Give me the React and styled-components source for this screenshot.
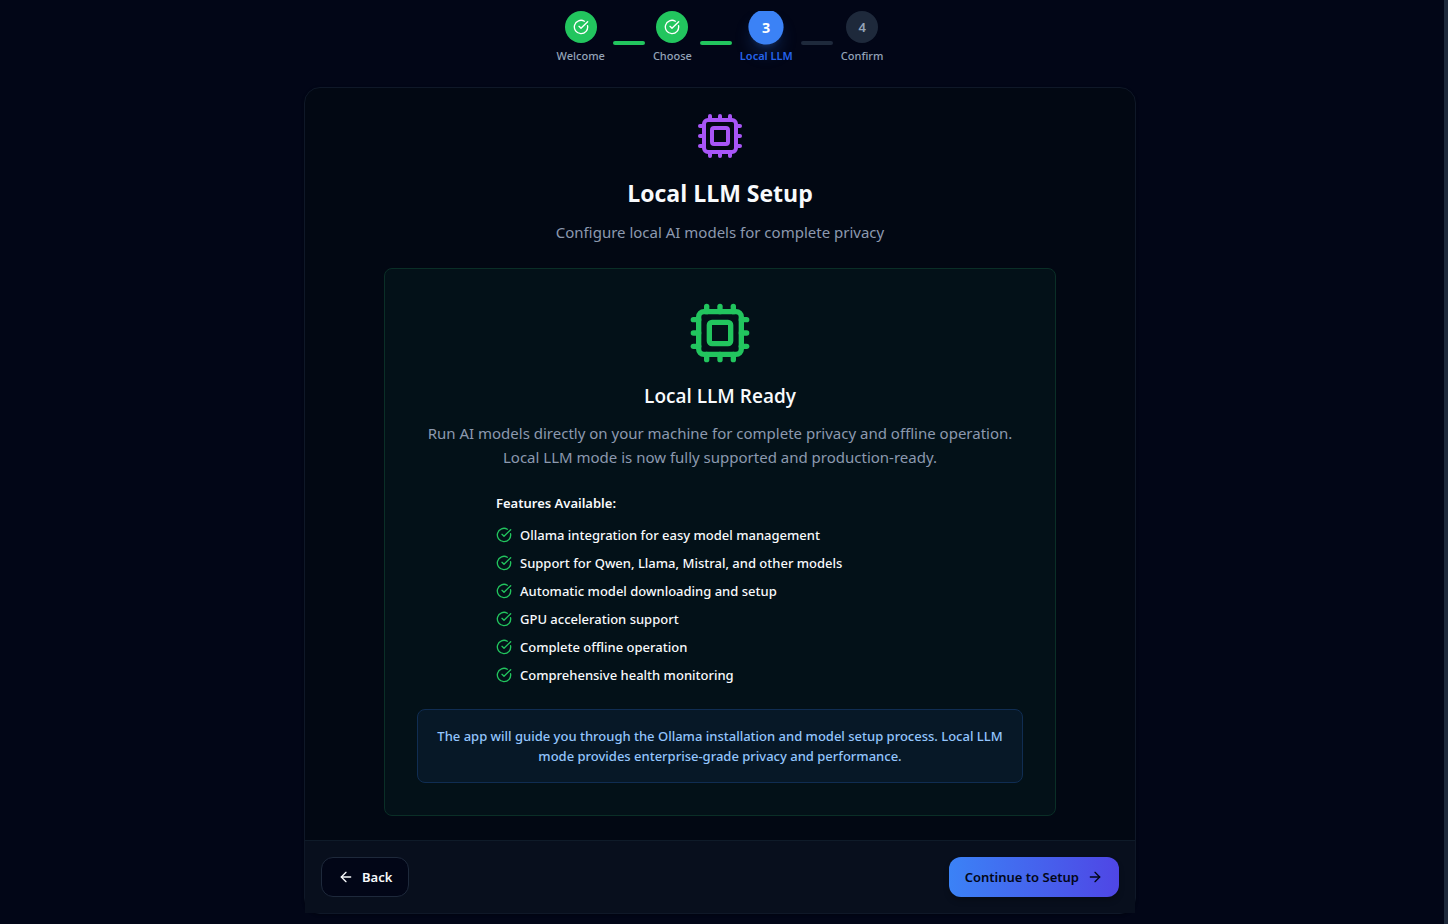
import React from "react";
import styled, { createGlobalStyle, css } from "styled-components";
import { ArrowLeft, ArrowRight, CircleCheckBig, Cpu } from "lucide-react";

const headingFont = '"Segoe UI", "Open Sans", sans-serif';

const GlobalStyle = createGlobalStyle`
  *, *::before, *::after { box-sizing: border-box; }
  html { background: #020617; }
  body {
    margin: 0;
    color: #f8fafc;
    font-family: "Segoe UI", "Noto Sans", "Open Sans", sans-serif;
    font-size: 15px;
    line-height: 24px;
  }
  h1, h2, h3, p, ul, ol { margin: 0; padding: 0; }
  ul, ol { list-style: none; }
`;

const Page = styled.div`
  display: flex;
  min-height: 100vh;
  background: #020617;
`;

const Content = styled.main`
  flex: 1;
  min-width: 0;
  display: flex;
  flex-direction: column;
  align-items: center;
  padding: 11px 16px 10px;
`;

const ScrollTrack = styled.div`
  width: 8px;
  flex-shrink: 0;
  border-right: 4px solid #1e293b;
`;

const Stepper = styled.ol`
  display: flex;
  align-items: center;
  justify-content: center;
  gap: 8px;
  width: 100%;
  && { padding-bottom: 22px; }
  overflow: hidden;
`;

const Step = styled.li`
  display: flex;
  flex-direction: column;
  align-items: center;
  gap: 4px;
`;

const StepCircle = styled.span`
  display: flex;
  align-items: center;
  justify-content: center;
  width: 32px;
  height: 32px;
  border-radius: 50%;
  font-size: 13px;
  line-height: 20px;
  font-weight: 600;
  background: #1e293b;
  color: #94a3b8;
  ${(p) => p.$state === "done" && css`
    background: #22c55e;
    color: #ffffff;
  `}
  ${(p) => p.$state === "active" && css`
    background: #3b82f6;
    color: #ffffff;
    font-weight: 700;
    transform: scale(1.1);
    box-shadow: 0 10px 15px -3px rgba(59, 130, 246, 0.25), 0 4px 6px -4px rgba(59, 130, 246, 0.25);
  `}
`;

const StepLabel = styled.span`
  font-size: 11px;
  line-height: 18px;
  color: ${(p) => (p.$active ? "#2563eb" : "#94a3b8")};
  font-weight: ${(p) => (p.$active ? 600 : 500)};
`;

const StepLine = styled.li`
  width: 32px;
  height: 4px;
  margin-top: 10px;
  border-radius: 2px;
  background: ${(p) => (p.$done ? "#22c55e" : "#1e293b")};
`;

const Card = styled.section`
  width: 100%;
  max-width: 832px;
  border: 1px solid #0f1828;
  border-radius: 16px;
  background: #020813;
  box-shadow: 0 1px 3px rgba(0, 0, 0, 0.3);
`;

const CardBody = styled.div`
  display: flex;
  flex-direction: column;
  align-items: center;
  padding: 24px;
  text-align: center;
`;

const HeaderIcon = styled(Cpu)`
  display: block;
  color: #a855f7;
  margin-bottom: 16px;
`;

const Title = styled.h1`
  font-family: ${headingFont};
  font-size: 23px;
  line-height: 34px;
  font-weight: 700;
  && { margin-bottom: 10px; }
`;

const Muted = styled.p`
  font-size: 15px;
  line-height: 24px;
  color: #8c99af;
`;

const ReadyPanel = styled.section`
  width: 100%;
  max-width: 672px;
  margin-top: 24px;
  padding: 32px;
  display: flex;
  flex-direction: column;
  align-items: center;
  border: 1px solid #0a2f27;
  border-radius: 8px;
  background: #031118;
`;

const ReadyIcon = styled(Cpu)`
  display: block;
  color: #22c55e;
  margin-bottom: 16px;
`;

const ReadyTitle = styled.h2`
  font-family: ${headingFont};
  font-size: 19px;
  line-height: 30px;
  font-weight: 600;
  && { margin-bottom: 10px; }
`;

const Features = styled.div`
  width: 100%;
  max-width: 448px;
  margin: 24px 0;
  text-align: left;
  font-size: 13px;
  line-height: 20px;
`;

const FeaturesTitle = styled.h3`
  font-size: 13px;
  line-height: 20px;
  font-weight: 600;
  && { margin-bottom: 12px; }
`;

const FeatureList = styled.ul`
  display: flex;
  flex-direction: column;
  gap: 8px;
`;

const Feature = styled.li`
  display: flex;
  align-items: center;
  gap: 8px;
  font-weight: 500;
  svg { color: #22c55e; flex-shrink: 0; }
`;

const Note = styled.p`
  width: 100%;
  && { padding: 16px; }
  border: 1px solid #102d52;
  border-radius: 8px;
  background: #071827;
  color: #93c5fd;
  font-size: 13px;
  line-height: 20px;
  font-weight: 500;
`;

const CardFooter = styled.footer`
  display: flex;
  align-items: center;
  justify-content: space-between;
  padding: 16px;
  border-top: 1px solid #0f1b29;
  background: #080f1d;
`;

const Button = styled.button`
  display: inline-flex;
  align-items: center;
  justify-content: center;
  gap: 8px;
  height: 40px;
  padding: 0 16px;
  border: 1px solid #1e293b;
  border-radius: 12px;
  background: #020617;
  color: #f8fafc;
  font-family: inherit;
  font-size: 13px;
  line-height: 20px;
  font-weight: 600;
  cursor: pointer;
  ${(p) => p.$primary && css`
    border: 0;
    background: linear-gradient(to right, #3b82f6, #4f46e5);
    color: #020617;
    box-shadow: 0 4px 6px -1px rgba(0, 0, 0, 0.3);
  `}
`;

const steps = [
  { label: "Welcome", state: "done" },
  { label: "Choose", state: "done" },
  { label: "Local LLM", state: "active" },
  { label: "Confirm", state: "todo" },
];

const features = [
  "Ollama integration for easy model management",
  "Support for Qwen, Llama, Mistral, and other models",
  "Automatic model downloading and setup",
  "GPU acceleration support",
  "Complete offline operation",
  "Comprehensive health monitoring",
];

export default function App() {
  return (
    <>
      <GlobalStyle />
      <Page>
        <Content>
          <Stepper>
            {steps.map((step, i) => (
              <React.Fragment key={step.label}>
                {i > 0 && <StepLine $done={steps[i - 1].state === "done"} aria-hidden="true" />}
                <Step aria-current={step.state === "active" ? "step" : undefined}>
                  <StepCircle $state={step.state}>
                    {step.state === "done" ? <CircleCheckBig size={16} /> : i + 1}
                  </StepCircle>
                  <StepLabel $active={step.state === "active"}>{step.label}</StepLabel>
                </Step>
              </React.Fragment>
            ))}
          </Stepper>
          <Card>
            <CardBody>
              <HeaderIcon size={48} />
              <Title>Local LLM Setup</Title>
              <Muted>Configure local AI models for complete privacy</Muted>
              <ReadyPanel>
                <ReadyIcon size={64} />
                <ReadyTitle>Local LLM Ready</ReadyTitle>
                <Muted>
                  Run AI models directly on your machine for complete privacy and offline operation.
                  Local LLM mode is now fully supported and production-ready.
                </Muted>
                <Features>
                  <FeaturesTitle>Features Available:</FeaturesTitle>
                  <FeatureList>
                    {features.map((text) => (
                      <Feature key={text}>
                        <CircleCheckBig size={16} />
                        {text}
                      </Feature>
                    ))}
                  </FeatureList>
                </Features>
                <Note>
                  The app will guide you through the Ollama installation and model setup process.
                  Local LLM mode provides enterprise-grade privacy and performance.
                </Note>
              </ReadyPanel>
            </CardBody>
            <CardFooter>
              <Button type="button">
                <ArrowLeft size={16} />
                Back
              </Button>
              <Button type="button" $primary>
                Continue to Setup
                <ArrowRight size={16} />
              </Button>
            </CardFooter>
          </Card>
        </Content>
        <ScrollTrack aria-hidden="true" />
      </Page>
    </>
  );
}
